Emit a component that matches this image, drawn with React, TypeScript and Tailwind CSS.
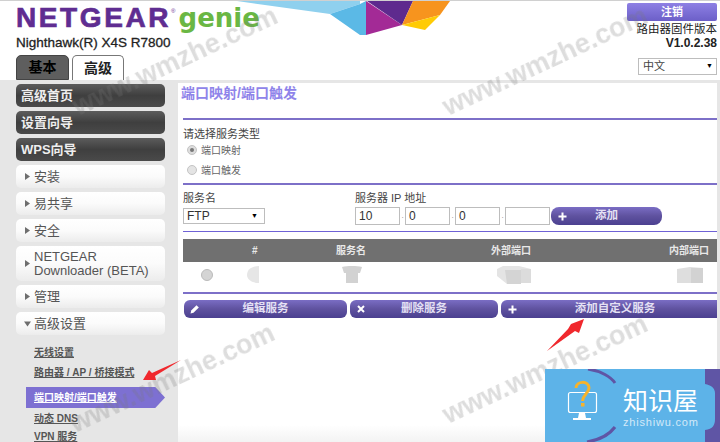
const FONT = "font-['Liberation_Sans','Noto_Sans_CJK_SC',sans-serif]";

const DARK_ITEMS = ["高级首页", "设置向导", "WPS向导"];
const LIGHT_ITEMS_TOP = ["安装", "易共享", "安全"];
const SUB_ITEMS = ["无线设置", "路由器 / AP / 桥接模式"];

const WATERMARKS: { cx: number; cy: number }[] = [
  { cx: 175, cy: 61 },
  { cx: 545, cy: 61 },
  { cx: 172, cy: 378 },
  { cx: 545, cy: 369 },
];

function Tri({ down = false }: { down?: boolean }) {
  return (
    <svg width="7" height="7" viewBox="0 0 7 7" className="shrink-0">
      <path d={down ? "M0 1.5H7L3.5 6.5Z" : "M1 0L6 3.5L1 7Z"} fill="#6e6e6e" />
    </svg>
  );
}

function DarkItem({ label }: { label: string }) {
  return (
    <div className="h-[23px] shrink-0 rounded-[5px] bg-gradient-to-b from-[#5c5c5c] via-[#3f3f3f] to-[#4a4a4a] flex items-center pl-[5px] text-[13px] font-bold text-[#eeeeee]">
      {label}
    </div>
  );
}

function LightItem({ label, down }: { label: string; down?: boolean }) {
  return (
    <div className="h-[23px] shrink-0 rounded-[5px] bg-gradient-to-b from-white via-[#fbfbfb] to-[#ececec] flex items-center pl-[8px] gap-[2px] text-[13px] text-[#555555]">
      <Tri down={down} />
      <span className="ml-[1px]">{label}</span>
    </div>
  );
}

function Sidebar() {
  return (
    <div className="w-[178px] shrink-0 pl-[16px] pr-[13px] pt-[1px] flex flex-col gap-[4px]">
      {DARK_ITEMS.map((l) => (
        <DarkItem key={l} label={l} />
      ))}
      {LIGHT_ITEMS_TOP.map((l) => (
        <LightItem key={l} label={l} />
      ))}
      <div className="h-[35px] shrink-0 rounded-[5px] bg-gradient-to-b from-white via-[#fbfbfb] to-[#ececec] flex items-center pl-[8px] gap-[3px] text-[13px] leading-[14px] text-[#555555]">
        <Tri />
        <span>
          NETGEAR
          <br />
          Downloader (BETA)
        </span>
      </div>
      <LightItem label="管理" />
      <LightItem label="高级设置" down />
      <div className="mt-[3px] shrink-0 flex flex-col text-[10px] text-[#555555] font-bold">
        {SUB_ITEMS.map((l) => (
          <div key={l} className="h-[20px] shrink-0 pl-[18px] flex items-center underline whitespace-nowrap">
            {l}
          </div>
        ))}
        <div className="ml-[10px] mt-[5px] h-[21px] shrink-0 bg-[#7d70d2] text-white underline flex items-center pl-[8px] [clip-path:polygon(0_0,93%_0,100%_50%,93%_100%,0_100%)]">
          端口映射/端口触发
        </div>
        <div className="h-[20px] shrink-0 pl-[18px] flex items-center underline">动态 DNS</div>
        <div className="h-[16px] shrink-0 pl-[18px] flex items-center underline">VPN 服务</div>
      </div>
    </div>
  );
}

function PurpleButton({ icon, label, className, labelClass = "" }: { icon: React.ReactNode; label: string; className: string; labelClass?: string }) {
  return (
    <div className={`h-[18px] rounded-[6px] bg-gradient-to-b from-[#7a6dc4] via-[#5f529f] to-[#4b4090] flex items-center text-[11.5px] font-bold text-[#e4e0f4] relative ${className}`}>
      <span className="absolute left-[2px] top-[3px] w-[12px] h-[12px] flex items-center justify-center ml-[3px]">{icon}</span>
      <span className={`flex-1 text-center ${labelClass}`}>{label}</span>
    </div>
  );
}

const PlusIcon = (
  <svg width="9" height="9" viewBox="0 0 9 9">
    <path d="M4.5 0.5V8.5M0.5 4.5H8.5" stroke="#fff" strokeWidth="2" />
  </svg>
);
const CrossIcon = (
  <svg width="8" height="8" viewBox="0 0 8 8">
    <path d="M1 1L7 7M7 1L1 7" stroke="#fff" strokeWidth="2" />
  </svg>
);
const PencilIcon = (
  <svg width="10" height="10" viewBox="0 0 10 10">
    <path d="M0.5 9.5L1.2 6.5L6.5 1.2L8.8 3.5L3.5 8.8Z" fill="#fff" />
  </svg>
);

function IpBox({ value }: { value: string }) {
  return (
    <div className="h-[18px] w-[45px] border border-[#bdbdbd] bg-white flex items-center pl-[3px] text-[12px] text-[#333333]">{value}</div>
  );
}

function IpDot() {
  return <span className="w-[5px] text-center text-[8px] text-[#888888]">.</span>;
}

function Main() {
  return (
    <div className="w-[539px] bg-white pl-[5px] flex flex-col h-[359px] text-[#333333]">
      <div className="h-[35px] flex items-start text-[14px] font-bold text-[#8f84ea] -ml-[2px]">端口映射/端口触发</div>
      <div className="h-[2px] bg-[#7d70c8]" />
      <div className="h-[63px] flex flex-col text-[11px]">
        <div className="mt-[6px] text-[11px] text-[#444444]">请选择服务类型</div>
        <div className="flex items-center ml-[4px] gap-[4px] text-[#666666] text-[10px]">
          <span className="w-[10px] h-[10px] rounded-full bg-[#dddddd] border border-[#c4c4c4] flex items-center justify-center">
            <span className="w-[4px] h-[4px] rounded-full bg-[#777777]" />
          </span>
          端口映射
        </div>
        <div className="flex items-center mt-[5px] ml-[4px] gap-[4px] text-[#666666] text-[10px]">
          <span className="w-[10px] h-[10px] rounded-full bg-[#e4e4e4] border border-[#c4c4c4]" />
          端口触发
        </div>
      </div>
      <div className="h-[2px] bg-[#7d70c8]" />
      <div className="h-[46px] flex">
        <div className="w-[172px] flex flex-col">
          <div className="text-[11px] leading-[14px] mt-[6px] text-[#444444]">服务名</div>
          <div className="mt-[3px] w-[82px] h-[16px] border border-[#bdbdbd] flex items-center justify-between px-[3px] text-[12px]">
            FTP<span className="text-[7px] text-black pr-[3px]">▼</span>
          </div>
        </div>
        <div className="flex flex-col">
          <div className="text-[11px] leading-[14px] mt-[6px] text-[#444444]">服务器 IP 地址</div>
          <div className="flex items-center mt-[2px]">
            <IpBox value="10" />
            <IpDot />
            <IpBox value="0" />
            <IpDot />
            <IpBox value="0" />
            <IpDot />
            <IpBox value="" />
            <PurpleButton icon={PlusIcon} label="添加" className="w-[111px] ml-[1px] !rounded-[8px]" />
          </div>
        </div>
      </div>
      <div className="h-[1px] bg-[#6f62d6]" />
      <div className="mt-[7px] h-[23px] bg-[#707070] flex items-center text-[10px] font-bold text-[#e8e8e8]">
        <span className="w-[146px] pl-[69px]">#</span>
        <span className="w-[150px] pl-[7px]">服务名</span>
        <span className="w-[170px] pl-[12px]">外部端口</span>
        <span className="flex-1 text-right pr-[8px]">内部端口</span>
      </div>
      <div className="h-[30px] flex items-center pb-[5px]">
        <span className="ml-[18px] w-[12px] h-[12px] rounded-full bg-[#d4d4d4] border border-[#bbbbbb]" />
        <svg width="12" height="17" viewBox="0 0 12 17" className="ml-[34px]">
          <path d="M12 0C4 0 0 4 0 9C0 13 4 17 12 17Z" fill="#e6e6e6" />
        </svg>
        <svg width="20" height="17" viewBox="0 0 20 17" className="ml-[83px]">
          <path d="M0 1C3 0 6 0 10 0C14 0 17 0 20 1L18 7H16V17H4V7H2Z" fill="#d2d2d2" />
        </svg>
        <svg width="34" height="18" viewBox="0 0 34 18" className="ml-[135px]">
          <path d="M0 3L6 0H22L34 3V17H24V18H10L0 10Z" fill="#e4e4e4" />
          <path d="M8 4H24V18H10Z" fill="#d4d4d4" />
          <path d="M24 3H34V17H24Z" fill="#dcdcdc" />
        </svg>
        <svg width="26" height="16" viewBox="0 0 26 16" className="ml-[146px]">
          <path d="M0 2L13 0L26 1V16H0Z" fill="#dedede" />
          <path d="M14 1H26V16H14Z" fill="#d2d2d2" />
        </svg>
      </div>
      <div className="h-[2px] bg-[#7d70c8]" />
      <div className="mt-[6px] flex gap-[3px] pl-[1px]">
        <PurpleButton icon={PencilIcon} label="编辑服务" className="w-[163px]" />
        <PurpleButton icon={CrossIcon} label="删除服务" className="w-[148px]" />
        <PurpleButton icon={PlusIcon} label="添加自定义服务" labelClass="pl-[12px]" className="flex-1 !rounded-r-none" />
      </div>
      <div className="mt-auto h-[17px] -ml-[5px] bg-gradient-to-b from-white to-[#f3f3f3]" />
    </div>
  );
}

function Header() {
  return (
    <div className="h-[80px] flex relative border-t border-[#d0d0d0]">
      <div className="w-[178px] shrink-0 pl-[16px] flex flex-col">
        <div className="flex items-baseline h-[35px] whitespace-nowrap">
          <span className="text-[28px] leading-[34px] font-bold text-[#5f2d91] tracking-[2.6px] [-webkit-text-stroke:0.7px_#5f2d91]">NETGEAR</span>
          <span className="text-[6px] text-[#5f2d91] self-start mt-[6px]">®</span>
          <span className="text-[26px] leading-[30px] font-bold text-[#6ab744] ml-[3px] font-['DejaVu_Sans',sans-serif]">genie</span>
        </div>
        <div className="text-[13.5px] leading-[14px] text-[#222222] whitespace-nowrap [-webkit-text-stroke:0.3px_#222222]">Nighthawk(R) X4S R7800</div>
        <div className="flex gap-[3px] mt-[5px]">
          <div className="w-[53px] h-[25px] rounded-t-[5px] bg-[#5e5e5e] border border-[#444444] flex items-center justify-center text-[14px] font-bold text-black">基本</div>
          <div className="w-[52px] h-[25px] rounded-t-[5px] bg-white border border-[#777777] border-b-0 flex items-center justify-center text-[14px] font-bold text-[#222222]">高级</div>
        </div>
      </div>
      <div className="ml-auto w-[94px] pr-[3px] pt-[2px] flex flex-col items-end">
        <div className="w-[90px] h-[18px] rounded-[2px] bg-gradient-to-b from-[#8e80e4] to-[#6c5fc8] flex items-center justify-center text-[11px] font-bold text-white">注销</div>
        <div className="text-[11.5px] leading-[14px] mt-[1px] text-[#222222] whitespace-nowrap">路由器固件版本</div>
        <div className="text-[12px] leading-[14px] font-bold text-[#222222]">V1.0.2.38</div>
        <div className="mt-[8px] w-[79px] h-[17px] border border-[#bdbdbd] flex items-center justify-between pl-[4px] pr-[3px] text-[11px] text-[#444444]">
          中文<span className="text-[7px] text-black">▼</span>
        </div>
      </div>
      <svg className="absolute left-[235px] top-0" width="220" height="36" viewBox="235 0 220 36">
        <polygon points="237,0 360,0 360,3 330,13" fill="#8fd0ee" />
        <polygon points="330,13 360,3 366,0 366,34 360,34" fill="#5bb9e6" />
        <polygon points="366,34 366,0 402,24" fill="#a32a96" />
        <polygon points="367,0 413,0 402,24" fill="#5e2a8e" />
        <polygon points="413,0 450,0 440,14 402,24" fill="#f7941e" />
        <polygon points="402,24 440,14 425,29" fill="#ffcb05" />
      </svg>
    </div>
  );
}

export default function App() {
  return (
    <div className={`relative w-[720px] h-[442px] overflow-hidden bg-white ${FONT}`}>
      <Header />
      <div className="flex bg-[#e6e6e6] pt-[3px] h-[362px]">
        <Sidebar />
        <Main />
      </div>

      {WATERMARKS.map((w, i) => (
        <span
          key={i}
          className="absolute text-[27px] leading-[30px] font-bold text-[#777777]/25 whitespace-nowrap -translate-x-1/2 -translate-y-1/2 -rotate-[25deg] pointer-events-none blur-[0.4px]"
          style={{ left: w.cx, top: w.cy }}
        >
          www.wmzhe.com
        </span>
      ))}

      {/* red arrows */}
      <svg className="absolute left-0 top-0 pointer-events-none" width="720" height="442">
        <polygon points="181,360 155,376 156,380 143,380 149,370 152,373" fill="#f0282d" />
        <polygon points="547,351 568,329 571,324 584,319 579,333 575,331" fill="#f0282d" />
      </svg>

      {/* corner badge */}
      <div className="absolute left-[545px] top-[369px] w-[175px] h-[73px] bg-[#5db3e8] overflow-hidden">
        <svg className="absolute left-0 top-0" width="175" height="73" viewBox="0 0 175 73">
          <path d="M43 0C56 2 66 8 70 14M70 58C64 66 54 71 42 73" stroke="#5f55a5" strokeWidth="3" fill="none" />
          <path d="M160 0H175V73H160V61C168 60 170 56 170 50V24C170 19 166 16 160 15Z" fill="#5f55a5" />
          <rect x="23.5" y="23.5" width="28" height="20" rx="2" stroke="#fff" strokeWidth="1.2" fill="none" />
          <path d="M34 44H40L41 49H46V51H28V49H33Z" fill="#fff" />
          <path d="M31 19C31 12 44 11 44 19C44 24 38 25 37.5 32" stroke="#f7b32b" strokeWidth="3" fill="none" />
          <rect x="36" y="34" width="3.5" height="3.5" fill="#f7b32b" />
        </svg>
        <div className="absolute left-[78px] top-[19px] flex flex-col">
          <span className="text-[25px] leading-[27px] text-white">知识屋</span>
          <span className="text-[11px] leading-[11px] mt-[2px] text-[#d3e9f8] tracking-[0.8px] whitespace-nowrap">zhishiwu.com</span>
        </div>
      </div>
    </div>
  );
}
